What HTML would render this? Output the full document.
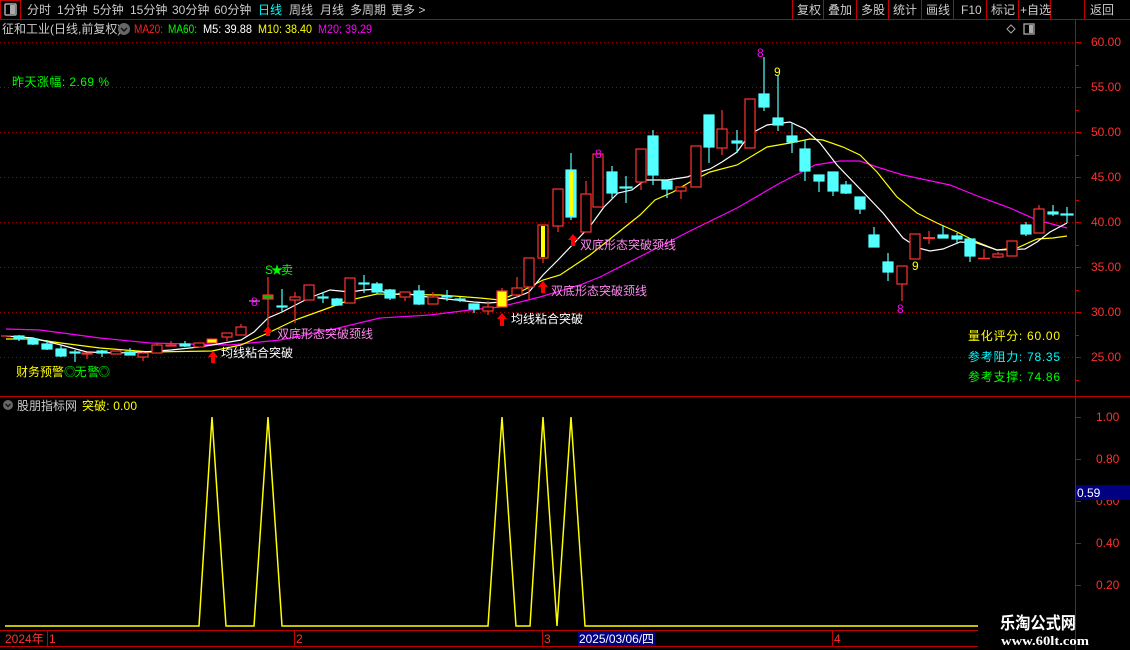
<!DOCTYPE html>
<html><head><meta charset="utf-8"><style>
html,body{margin:0;padding:0;background:#000;width:1130px;height:650px;overflow:hidden}
svg{display:block}
text{font-family:"Liberation Sans","Noto Sans CJK SC",sans-serif;font-size:12px}
</style></head><body>
<svg width="1130" height="650" viewBox="0 0 1130 650" xmlns="http://www.w3.org/2000/svg">
<rect width="1130" height="650" fill="#000"/>
<!-- top bar -->
<line x1="0" y1="19.5" x2="1130" y2="19.5" stroke="#c00000"/>
<rect x="0.5" y="0.5" width="20" height="19" fill="none" stroke="#c00000"/>
<rect x="5" y="4" width="11" height="11" fill="none" stroke="#aaa" stroke-width="1.5" rx="1"/><rect x="10" y="5" width="5" height="9" fill="#aaa"/>
<g fill="#ccc">
<text x="27" y="14">分时</text><text x="57" y="14">1分钟</text><text x="93" y="14">5分钟</text><text x="130" y="14">15分钟</text><text x="172" y="14">30分钟</text><text x="214" y="14">60分钟</text>
<text x="258" y="14" fill="#00ffff">日线</text><text x="289" y="14">周线</text><text x="320" y="14">月线</text><text x="350" y="14">多周期</text><text x="391" y="14">更多 &gt;</text>
</g>
<g stroke="#c00000"><line x1="792.5" y1="0" x2="792.5" y2="19"/><line x1="823.5" y1="0" x2="823.5" y2="19"/><line x1="856.5" y1="0" x2="856.5" y2="19"/><line x1="888.5" y1="0" x2="888.5" y2="19"/><line x1="921.5" y1="0" x2="921.5" y2="19"/><line x1="953.5" y1="0" x2="953.5" y2="19"/><line x1="986.5" y1="0" x2="986.5" y2="19"/><line x1="1018.5" y1="0" x2="1018.5" y2="19"/><line x1="1050.5" y1="0" x2="1050.5" y2="19"/><line x1="1084.5" y1="0" x2="1084.5" y2="19"/></g>
<g fill="#ccc"><text x="797" y="14">复权</text><text x="828" y="14">叠加</text><text x="861" y="14">多股</text><text x="893" y="14">统计</text><text x="926" y="14">画线</text><text x="961" y="14">F10</text><text x="991" y="14">标记</text><text x="1020" y="14">+自选</text><text x="1090" y="14">返回</text></g>
<!-- second row -->
<text x="2" y="33" fill="#ccc">征和工业(日线,前复权)</text>
<circle cx="124" cy="29" r="6" fill="#666"/><path d="M121 28 L124 31 L127 28" stroke="#111" fill="none" stroke-width="1.5"/>
<text x="134" y="33" fill="#ff2020" textLength="29" lengthAdjust="spacingAndGlyphs">MA20:</text><text x="168" y="33" fill="#00ff00" textLength="29" lengthAdjust="spacingAndGlyphs">MA60:</text>
<text x="203" y="33" fill="#fff" textLength="49" lengthAdjust="spacingAndGlyphs">M5: 39.88</text><text x="258" y="33" fill="#ffff00" textLength="54" lengthAdjust="spacingAndGlyphs">M10: 38.40</text><text x="318" y="33" fill="#ff00ff" textLength="54" lengthAdjust="spacingAndGlyphs">M20: 39.29</text>
<path d="M1011 25 L1015 29 L1011 33 L1007 29 Z" fill="none" stroke="#aaa"/>
<rect x="1024" y="24" width="10" height="10" fill="none" stroke="#aaa" stroke-width="1.3"/><rect x="1029" y="25" width="4" height="8" fill="#aaa"/>
<!-- axis -->
<line x1="1075.5" y1="20" x2="1075.5" y2="650" stroke="#c00000"/>
<line x1="0" y1="396.5" x2="1130" y2="396.5" stroke="#c00000"/>
<g stroke="#a00000" stroke-dasharray="1,3">
<line x1="0" y1="42.5" x2="1075" y2="42.5"/><line x1="0" y1="87.5" x2="1075" y2="87.5"/><line x1="0" y1="132.5" x2="1075" y2="132.5"/><line x1="0" y1="177.5" x2="1075" y2="177.5"/><line x1="0" y1="222.5" x2="1075" y2="222.5"/><line x1="0" y1="267.5" x2="1075" y2="267.5"/><line x1="0" y1="312.5" x2="1075" y2="312.5"/><line x1="0" y1="357.5" x2="1075" y2="357.5"/>
</g>
<g stroke="#c00000">
<line x1="1075" y1="42.5" x2="1081" y2="42.5"/><line x1="1075" y1="65.5" x2="1079" y2="65.5"/><line x1="1075" y1="87.5" x2="1081" y2="87.5"/><line x1="1075" y1="110.5" x2="1079" y2="110.5"/><line x1="1075" y1="132.5" x2="1081" y2="132.5"/><line x1="1075" y1="155.5" x2="1079" y2="155.5"/><line x1="1075" y1="177.5" x2="1081" y2="177.5"/><line x1="1075" y1="200.5" x2="1079" y2="200.5"/><line x1="1075" y1="222.5" x2="1081" y2="222.5"/><line x1="1075" y1="245.5" x2="1079" y2="245.5"/><line x1="1075" y1="267.5" x2="1081" y2="267.5"/><line x1="1075" y1="290.5" x2="1079" y2="290.5"/><line x1="1075" y1="312.5" x2="1081" y2="312.5"/><line x1="1075" y1="335.5" x2="1079" y2="335.5"/><line x1="1075" y1="357.5" x2="1081" y2="357.5"/><line x1="1075" y1="380.5" x2="1079" y2="380.5"/>
<line x1="1075" y1="417.5" x2="1081" y2="417.5"/><line x1="1075" y1="459.5" x2="1081" y2="459.5"/><line x1="1075" y1="501.5" x2="1081" y2="501.5"/><line x1="1075" y1="543.5" x2="1081" y2="543.5"/><line x1="1075" y1="585.5" x2="1081" y2="585.5"/>
</g>
<g fill="#ff3030">
<text x="1091" y="46">60.00</text><text x="1091" y="91">55.00</text><text x="1091" y="136">50.00</text><text x="1091" y="181">45.00</text><text x="1091" y="226">40.00</text><text x="1091" y="271">35.00</text><text x="1091" y="316">30.00</text><text x="1091" y="361">25.00</text>
<text x="1096" y="421">1.00</text><text x="1096" y="463">0.80</text><text x="1096" y="505">0.60</text><text x="1096" y="547">0.40</text><text x="1096" y="589">0.20</text>
</g>
<rect x="1076" y="485" width="54" height="15" fill="#000080"/><text x="1077" y="497" fill="#fff">0.59</text>
<!-- MAs -->
<polyline fill="none" stroke="#ff00ff" stroke-width="1.2" points="6,329 40,330 100,338 150,343 230,345 280,340 330,330 380,318 430,315 470,310 500,307 540,297 580,285 600,277 653,250 690,231 737,208 780,183 800,173 815,165 840,161 860,161 877,167 903,175 950,185 980,197 1010,208 1037,220 1067,228"/>
<polyline fill="none" stroke="#ffff00" stroke-width="1.2" points="6,339 33,339 61,343 100,348 150,352 212,351 241,345 268,333 295,320 323,310 350,300 377,294 440,295 480,298 500,300 520,292 543,280 560,275 590,255 615,235 640,215 655,200 673,192 690,182 710,172 737,165 767,147 790,143 810,139 823,140 843,147 860,155 877,172 897,197 917,213 937,223 957,232 977,242 997,250 1017,248 1037,239 1053,238 1067,236"/>
<polyline fill="none" stroke="#ffffff" stroke-width="1.2" points="6,336 33,338 61,345 87,352 116,353 143,352 171,350 199,347 212,345 241,340 254,332 268,318 282,312 309,298 330,290 350,292 364,290 377,289 390,295 405,293 419,296 447,299 474,302 488,303 502,302 517,297 529,292 543,275 558,260 577,240 591,225 604,207 618,193 632,190 645,180 667,180 687,177 700,172 710,169 722,162 737,152 750,134 767,125 790,122 805,129 820,143 837,165 863,192 883,213 903,238 918,248 930,251 943,249 960,242 977,243 997,250 1025,249 1037,242 1050,232 1067,223"/>
<!-- candles -->
<g stroke="#ff3232" fill="#000" stroke-width="1.2">
<line x1="1" y1="336" x2="11" y2="336"/>
<line x1="87" y1="353" x2="87" y2="359"/><rect x="82" y="353" width="10" height="1"/>
<rect x="111" y="351" width="10" height="3"/>
<line x1="143" y1="352" x2="143" y2="361"/><rect x="138" y="353" width="10" height="4"/>
<line x1="157" y1="343" x2="157" y2="345"/><rect x="152" y="345" width="10" height="8"/>
<line x1="171" y1="341" x2="171" y2="345"/><rect x="166" y="345" width="10" height="1"/>
<rect x="194" y="343" width="10" height="4"/>
<line x1="227" y1="337" x2="227" y2="341"/><rect x="222" y="333" width="10" height="4"/>
<line x1="241" y1="324" x2="241" y2="327"/><rect x="236" y="327" width="10" height="8"/>
<line x1="268" y1="277" x2="268" y2="328"/><rect x="263" y="295" width="10" height="4" fill="#00c000"/>
<line x1="295" y1="292" x2="295" y2="323"/><rect x="290" y="297" width="10" height="3"/>
<rect x="304" y="285" width="10" height="15"/>
<rect x="345" y="278" width="10" height="25"/>
<line x1="405" y1="297" x2="405" y2="301"/><rect x="400" y="292" width="10" height="5"/>
<line x1="433" y1="292" x2="433" y2="297"/><rect x="428" y="297" width="10" height="7"/>
<line x1="488" y1="301" x2="488" y2="315"/><rect x="483" y="307" width="10" height="4"/>
<line x1="502" y1="288" x2="502" y2="291"/><rect x="497" y="291" width="10" height="16" fill="#ffff00"/>
<line x1="517" y1="277" x2="517" y2="298"/><rect x="512" y="288" width="10" height="7"/>
<line x1="529" y1="287" x2="529" y2="300"/><rect x="524" y="258" width="10" height="29"/>
<line x1="543" y1="258" x2="543" y2="263"/><rect x="538" y="225" width="10" height="33"/><rect x="541" y="226" width="4" height="31" fill="#ffff00" stroke="none"/>
<line x1="558" y1="226" x2="558" y2="232"/><rect x="553" y="189" width="10" height="37"/>
<line x1="586" y1="181" x2="586" y2="194"/><rect x="581" y="194" width="10" height="38"/>
<rect x="593" y="154" width="10" height="53"/>
<line x1="641" y1="182" x2="641" y2="190"/><rect x="636" y="149" width="10" height="33"/>
<line x1="681" y1="191" x2="681" y2="199"/><rect x="676" y="187" width="10" height="4"/>
<rect x="691" y="146" width="10" height="41"/>
<line x1="722" y1="110" x2="722" y2="155"/><rect x="717" y="129" width="10" height="19"/>
<rect x="745" y="99" width="10" height="49"/>
<line x1="902" y1="284" x2="902" y2="301"/><rect x="897" y="266" width="10" height="18"/>
<rect x="910" y="234" width="10" height="25"/>
<line x1="929" y1="231" x2="929" y2="244"/><line x1="923" y1="238" x2="935" y2="238" stroke-width="2"/>
<line x1="984" y1="249" x2="984" y2="258"/><line x1="978" y1="258.5" x2="990" y2="258.5" stroke-width="1.5"/>
<line x1="998" y1="252" x2="998" y2="258"/><rect x="993" y="254" width="10" height="3"/>
<rect x="1007" y="241" width="10" height="15"/>
<line x1="1039" y1="205" x2="1039" y2="209"/><rect x="1034" y="209" width="10" height="24"/>
</g>
<g stroke="#54ffff" fill="#54ffff" stroke-width="1.2">
<line x1="19" y1="335" x2="19" y2="341"/><rect x="14" y="336" width="10" height="3"/>
<line x1="33" y1="338" x2="33" y2="345"/><rect x="28" y="339" width="10" height="5"/>
<line x1="47" y1="340" x2="47" y2="350"/><rect x="42" y="344" width="10" height="5"/>
<line x1="61" y1="345" x2="61" y2="357"/><rect x="56" y="349" width="10" height="7"/>
<line x1="75" y1="350" x2="75" y2="362"/><rect x="70" y="352" width="10" height="1"/>
<line x1="102" y1="350" x2="102" y2="357"/><rect x="97" y="351" width="10" height="2"/>
<line x1="130" y1="348" x2="130" y2="355"/><rect x="125" y="352" width="10" height="3"/>
<line x1="185" y1="341" x2="185" y2="347"/><rect x="180" y="344" width="10" height="2"/>
<line x1="282" y1="289" x2="282" y2="312"/><rect x="277" y="306" width="10" height="1"/>
<line x1="323" y1="292" x2="323" y2="303"/><rect x="318" y="297" width="10" height="1"/>
<line x1="337" y1="298" x2="337" y2="306"/><rect x="332" y="299" width="10" height="6"/>
<line x1="364" y1="275" x2="364" y2="293"/><rect x="359" y="283" width="10" height="1"/>
<line x1="377" y1="282" x2="377" y2="294"/><rect x="372" y="284" width="10" height="8"/>
<line x1="390" y1="289" x2="390" y2="300"/><rect x="385" y="290" width="10" height="8"/>
<line x1="419" y1="285" x2="419" y2="305"/><rect x="414" y="291" width="10" height="13"/>
<line x1="447" y1="290" x2="447" y2="301"/><rect x="442" y="296" width="10" height="1"/>
<line x1="460" y1="297" x2="460" y2="302"/><rect x="455" y="299" width="10" height="1"/>
<line x1="474" y1="304" x2="474" y2="313"/><rect x="469" y="304" width="10" height="5"/>
<line x1="571" y1="153" x2="571" y2="220"/><rect x="566" y="170" width="10" height="47"/><rect x="569" y="171" width="4" height="45" fill="#ffff00" stroke="none"/>
<line x1="612" y1="166" x2="612" y2="198"/><rect x="607" y="172" width="10" height="21"/>
<line x1="626" y1="176" x2="626" y2="203"/><rect x="620" y="187" width="12" height="1"/>
<line x1="653" y1="130" x2="653" y2="185"/><rect x="648" y="136" width="10" height="39"/>
<line x1="667" y1="181" x2="667" y2="198"/><rect x="662" y="181" width="10" height="8"/>
<line x1="709" y1="147" x2="709" y2="163"/><rect x="704" y="115" width="10" height="32"/>
<line x1="737" y1="130" x2="737" y2="153"/><rect x="732" y="141" width="10" height="2"/>
<line x1="764" y1="57" x2="764" y2="111"/><rect x="759" y="94" width="10" height="13"/>
<line x1="778" y1="75" x2="778" y2="131"/><rect x="773" y="118" width="10" height="7"/>
<line x1="792" y1="123" x2="792" y2="153"/><rect x="787" y="136" width="10" height="6"/>
<line x1="805" y1="140" x2="805" y2="181"/><rect x="800" y="149" width="10" height="22"/>
<line x1="819" y1="175" x2="819" y2="192"/><rect x="814" y="175" width="10" height="6"/>
<line x1="833" y1="172" x2="833" y2="196"/><rect x="828" y="172" width="10" height="19"/>
<line x1="846" y1="181" x2="846" y2="194"/><rect x="841" y="185" width="10" height="8"/>
<line x1="860" y1="197" x2="860" y2="214"/><rect x="855" y="197" width="10" height="12"/>
<line x1="874" y1="227" x2="874" y2="247"/><rect x="869" y="235" width="10" height="12"/>
<line x1="888" y1="253" x2="888" y2="281"/><rect x="883" y="262" width="10" height="10"/>
<line x1="943" y1="226" x2="943" y2="238"/><rect x="938" y="235" width="10" height="3"/>
<line x1="957" y1="233" x2="957" y2="244"/><rect x="952" y="236" width="10" height="3"/>
<line x1="970" y1="239" x2="970" y2="262"/><rect x="965" y="239" width="10" height="17"/>
<line x1="1026" y1="222" x2="1026" y2="236"/><rect x="1021" y="225" width="10" height="9"/>
<line x1="1053" y1="205" x2="1053" y2="216"/><rect x="1048" y="212" width="10" height="2"/>
<line x1="1067" y1="207" x2="1067" y2="223"/><rect x="1061" y="214" width="12" height="1"/>
</g>
<rect x="207" y="339" width="10" height="4" fill="#ffff00" stroke="#ff3232"/>
<!-- labels -->
<g fill="#ff00ff"><text x="757" y="57">8</text><text x="595" y="158">8</text><text x="897" y="313">8</text><text x="251" y="306">8</text></g>
<line x1="249" y1="301" x2="260" y2="301" stroke="#ff80ff"/>
<g fill="#ffff00"><text x="774" y="76">9</text><text x="912" y="270">9</text></g>
<text x="265" y="274" fill="#00ff00" textLength="28">S★卖</text>
<g fill="#ff0000">
<path d="M213 351 L208 357 L211 357 L211 363 L215 363 L215 357 L218 357 Z"/>
<path d="M268 326 L263 332 L266 332 L266 336 L270 336 L270 332 L273 332 Z"/>
<path d="M502 313 L497 319 L500 319 L500 326 L504 326 L504 319 L507 319 Z"/>
<path d="M543 281 L538 287 L541 287 L541 293 L545 293 L545 287 L548 287 Z"/>
<path d="M573 234 L568 240 L571 240 L571 246 L575 246 L575 240 L578 240 Z"/>
</g>
<g fill="#fff"><text x="221" y="357" textLength="72">均线粘合突破</text><text x="511" y="323" textLength="72">均线粘合突破</text></g>
<g fill="#ff88ee"><text x="277" y="338" textLength="96">双底形态突破颈线</text><text x="551" y="295" textLength="96">双底形态突破颈线</text><text x="580" y="249" textLength="96">双底形态突破颈线</text></g>
<text x="12" y="86" fill="#00ff00" textLength="97">昨天涨幅: 2.69 %</text>
<text x="16" y="376" fill="#ffff00" textLength="48">财务预警</text><text x="64" y="376" fill="#00ff00" textLength="46">◎无 警◎</text>
<text x="968" y="340" fill="#ffff00" textLength="92">量化评分: 60.00</text>
<text x="968" y="361" fill="#00ffff" textLength="92">参考阻力: 78.35</text>
<text x="968" y="381" fill="#00ff00" textLength="92">参考支撑: 74.86</text>
<!-- indicator -->
<circle cx="8" cy="405" r="5" fill="#666"/><path d="M5.5 404 L8 406.5 L10.5 404" stroke="#111" fill="none" stroke-width="1.3"/>
<text x="17" y="410" fill="#ccc" textLength="60">股朋指标网</text><text x="82" y="410" fill="#ffff00" textLength="55">突破: 0.00</text>
<polyline fill="none" stroke="#ffff00" stroke-width="1.5" points="5,626 199,626 212,417 226,626 254,626 268,417 282,626 488,626 502,417 516,626 530,626 543,417 557,626 571,417 585,626 978,626"/>
<!-- date axis -->
<line x1="0" y1="630.5" x2="978" y2="630.5" stroke="#c00000"/>
<line x1="0" y1="646.5" x2="978" y2="646.5" stroke="#c00000"/>
<g stroke="#c00000"><line x1="47.5" y1="631" x2="47.5" y2="646"/><line x1="294.5" y1="631" x2="294.5" y2="646"/><line x1="542.5" y1="631" x2="542.5" y2="646"/><line x1="832.5" y1="631" x2="832.5" y2="646"/></g>
<g fill="#ff3030"><text x="5" y="643">2024年</text><text x="49" y="643">1</text><text x="296" y="643">2</text><text x="544" y="643">3</text><text x="834" y="643">4</text></g>
<rect x="578" y="631" width="77" height="15" fill="#000080"/><text x="579" y="643" fill="#fff" textLength="75" lengthAdjust="spacingAndGlyphs">2025/03/06/四</text>
<!-- logo -->
<text x="1000" y="629" fill="#fff" style="font-size:17px;font-weight:bold" textLength="76" lengthAdjust="spacingAndGlyphs">乐淘公式网</text>
<text x="1001" y="645" fill="#fff" style="font-family:'Liberation Serif',serif;font-size:13px;font-weight:bold" textLength="88" lengthAdjust="spacingAndGlyphs">www.60lt.com</text>
</svg>
</body></html>
